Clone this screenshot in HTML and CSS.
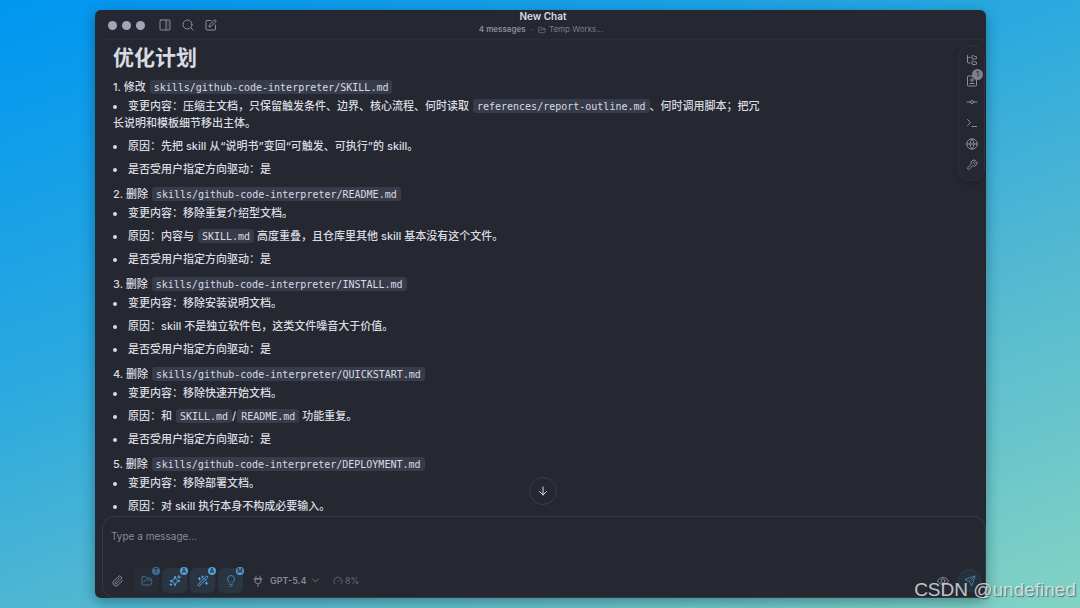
FILE: index.html
```html
<!DOCTYPE html>
<html lang="zh-CN">

<head>
    <meta charset="UTF-8">
    <title>New Chat</title>
    <link rel="stylesheet" href="styles.css">
</head>
<body>
<div class="window">
    <header class="titlebar">
        <div class="tools">
            <div class="lights">
                <span class="light"></span>
                <span class="light"></span>
                <span class="light"></span>
            </div>
            <button class="tool" aria-label="Sidebar"><svg class="icon" viewBox="0 0 24 24"><rect x="2" y="2" width="20" height="20" rx="2"/><path d="M14 2v20M18 7h.01M18 12h.01M18 17h.01"/></svg></button>
            <button class="tool" aria-label="Search"><svg class="icon" viewBox="0 0 24 24"><circle cx="11" cy="11" r="9"/><path d="m22 22-4.5-4.5"/></svg></button>
            <button class="tool" aria-label="New chat"><svg class="icon" viewBox="0 0 24 24"><path d="M12 3H4a2 2 0 0 0-2 2v15a2 2 0 0 0 2 2h15a2 2 0 0 0 2-2v-8"/><path d="M18.4 2.6a2.1 2.1 0 0 1 3 3L12.4 14.600l-4.400 1.400 1.400-4.400z"/></svg></button>
        </div>
        <div class="heading">
            <div class="title">New Chat</div>
            <div class="subtitle">
                <span class="count">4 messages</span>
                <span class="sep">·</span>
                <svg class="icon folder" viewBox="0 0 24 24"><path d="m6 14 1.500-2.900A2 2 0 0 1 9.240 10H20a2 2 0 0 1 1.940 2.500l-1.540 6a2 2 0 0 1-1.950 1.500H4a2 2 0 0 1-2-2V5a2 2 0 0 1 2-2h3.900a2 2 0 0 1 1.690.9l.810 1.200a2 2 0 0 0 1.670.9H18a2 2 0 0 1 2 2v2"/></svg>
                <span>Temp Works...</span>
            </div>
        </div>
    </header>

    <main class="content">
        <article class="message">
            <h1>优化计划</h1>
            <section>
                <p>1. 修改 <code>skills/github-code-interpreter/SKILL.md</code></p>
                <ul>
                    <li>变更内容：压缩主文档，只保留触发条件、边界、核心流程、何时读取 <code>references/report-outline.md</code>、何时调用脚本；把冗长说明和模板细节移出主体。</li>
                    <li>原因：先把 skill 从“说明书”变回“可触发、可执行”的 skill。</li>
                    <li>是否受用户指定方向驱动：是</li>
                </ul>
            </section>
            <section>
                <p>2. 删除 <code>skills/github-code-interpreter/README.md</code></p>
                <ul>
                    <li>变更内容：移除重复介绍型文档。</li>
                    <li>原因：内容与 <code>SKILL.md</code> 高度重叠，且仓库里其他 skill 基本没有这个文件。</li>
                    <li>是否受用户指定方向驱动：是</li>
                </ul>
            </section>
            <section>
                <p>3. 删除 <code>skills/github-code-interpreter/INSTALL.md</code></p>
                <ul>
                    <li>变更内容：移除安装说明文档。</li>
                    <li>原因：skill 不是独立软件包，这类文件噪音大于价值。</li>
                    <li>是否受用户指定方向驱动：是</li>
                </ul>
            </section>
            <section>
                <p>4. 删除 <code>skills/github-code-interpreter/QUICKSTART.md</code></p>
                <ul>
                    <li>变更内容：移除快速开始文档。</li>
                    <li>原因：和 <code>SKILL.md</code>/<code>README.md</code> 功能重复。</li>
                    <li>是否受用户指定方向驱动：是</li>
                </ul>
            </section>
            <section>
                <p>5. 删除 <code>skills/github-code-interpreter/DEPLOYMENT.md</code></p>
                <ul>
                    <li>变更内容：移除部署文档。</li>
                    <li>原因：对 skill 执行本身不构成必要输入。</li>
                </ul>
            </section>
        </article>

        <nav class="rail">
            <button aria-label="Files"><svg class="icon" viewBox="0 0 24 24"><path d="M20 10a1 1 0 0 0 1-1V6a1 1 0 0 0-1-1h-2.500a1 1 0 0 1-.8-.4l-.9-1.200A1 1 0 0 0 15 3h-2a1 1 0 0 0-1 1v5a1 1 0 0 0 1 1Z"/><path d="M20 21a1 1 0 0 0 1-1v-3a1 1 0 0 0-1-1h-2.900a1 1 0 0 1-.88-.55l-.42-.85a1 1 0 0 0-.92-.6H13a1 1 0 0 0-1 1v5a1 1 0 0 0 1 1Z"/><path d="M3 5a2 2 0 0 0 2 2h3M3 3v13a2 2 0 0 0 2 2h3"/></svg></button>
            <button aria-label="Changes"><svg class="icon" viewBox="0 0 24 24"><path d="M15 2H5a2 2 0 0 0-2 2v16a2 2 0 0 0 2 2h14a2 2 0 0 0 2-2V8z"/><path d="M8 10h8M12 6v8M8 17h8"/></svg><span class="count-badge">1</span></button>
            <button aria-label="Commits"><svg class="icon" viewBox="0 0 24 24"><circle cx="12" cy="12" r="3"/><path d="M2 12h7M15 12h7"/></svg></button>
            <button aria-label="Terminal"><svg class="icon" viewBox="0 0 24 24"><path d="m3 17 6-6-6-6M12 19h9"/></svg></button>
            <button aria-label="Browser"><svg class="icon" viewBox="0 0 24 24"><circle cx="12" cy="12" r="10.500"/><path d="M12 2a14.500 14.500 0 0 0 0 20 14.500 14.500 0 0 0 0-20M2 12h20"/></svg></button>
            <button aria-label="Settings"><svg class="icon" viewBox="0 0 24 24"><path d="M14.700 6.300a1 1 0 0 0 0 1.400l1.600 1.600a1 1 0 0 0 1.400 0l3.770-3.770a6 6 0 0 1-7.940 7.940l-6.910 6.910a2.120 2.120 0 0 1-3-3l6.910-6.910a6 6 0 0 1 7.940-7.940z"/></svg></button>
        </nav>

        <button class="to-bottom" aria-label="Scroll to bottom"><svg class="icon" viewBox="0 0 24 24"><path d="M12 4v16M19 13l-7 7-7-7"/></svg></button>
    </main>

    <form class="composer">
        <textarea aria-label="Message" placeholder="Type a message..."></textarea>
        <div class="actions">
            <button type="button" class="plain" aria-label="Attach"><svg class="icon" viewBox="0 0 24 24"><path d="m21.440 11.050-9.190 9.190a6 6 0 0 1-8.490-8.490l8.570-8.570A4 4 0 1 1 18 8.840l-8.590 8.570a2 2 0 0 1-2.830-2.830l8.490-8.480"/></svg></button>
            <div class="toggles">
                <button type="button" class="toggle dim" aria-label="Workspace"><svg class="icon" viewBox="0 0 24 24"><path d="m6 14 1.500-2.900A2 2 0 0 1 9.240 10H20a2 2 0 0 1 1.940 2.500l-1.540 6a2 2 0 0 1-1.950 1.500H4a2 2 0 0 1-2-2V5a2 2 0 0 1 2-2h3.900a2 2 0 0 1 1.690.9l.810 1.200a2 2 0 0 0 1.670.9H18a2 2 0 0 1 2 2v2"/></svg><span class="badge">T</span></button>
                <button type="button" class="toggle" aria-label="Agent"><svg class="icon" viewBox="0 0 24 24"><path d="M10 15.500A2 2 0 0 0 8.500 14l-6-1.600a.5.5 0 0 1 0-1L8.500 10A2 2 0 0 0 10 8.500l1.600-6a.5.5 0 0 1 1 0l1.500 6a2 2 0 0 0 1.400 1.400l6 1.600a.5.5 0 0 1 0 1l-6 1.500a2 2 0 0 0-1.400 1.500l-1.500 6a.5.5 0 0 1-1 0z"/><path d="M20 1v6M23 4h-6M4 17v4M6 19H2"/></svg><span class="badge">A</span></button>
                <button type="button" class="toggle" aria-label="Skills"><svg class="icon" viewBox="0 0 24 24"><path d="m21.600 3.600-1.200-1.200a1.200 1.200 0 0 0-1.700 0L2.400 18.600a1.200 1.200 0 0 0 0 1.700l1.200 1.200a1.200 1.200 0 0 0 1.700 0L21.600 5.400a1.200 1.200 0 0 0 0-1.800M14 7l3 3M5 5v5M19 14v5M11 2v3M7.500 7.500h-5M21.500 16.500h-5M12.500 3.500h-3"/></svg><span class="badge">A</span></button>
                <button type="button" class="toggle" aria-label="Thinking"><svg class="icon thin" viewBox="0 0 24 24"><path d="M15.500 15c.2-1 .7-1.700 1.500-2.500A6.500 6.500 0 0 0 19 8 7 7 0 0 0 5 8c0 1.500.5 3 2 4.500.8.8 1.300 1.500 1.500 2.500M9 18.500h6M10 22.500h4"/></svg><span class="badge">M</span></button>
            </div>
            <svg class="icon plug" viewBox="0 0 24 24"><path d="M12 23v-6M8 8V2M16 8V2M18 8v4a5 5 0 0 1-5 5h-2a5 5 0 0 1-5-5V8zM4 8h16"/></svg>
            <label class="model">
                <select aria-label="Model"><option>GPT-5.4</option></select>
                <svg class="icon" viewBox="0 0 24 24"><path d="m4 8 8 8 8-8"/></svg>
            </label>
            <span class="usage"><svg class="icon" viewBox="0 0 24 24"><path d="m12 14 4-4M4 19a10 10 0 1 1 16 0"/></svg>8%</span>
            <button type="button" class="plain preview" aria-label="Preview"><svg class="icon" viewBox="0 0 24 24"><path d="M1 12a12 12 0 0 1 22 0 12 12 0 0 1-22 0"/><circle cx="12" cy="12" r="4"/></svg></button>
            <button class="send" aria-label="Send"><svg class="icon" viewBox="0 0 24 24"><path d="M14.500 21.700a.5.5 0 0 0 1 0l6.500-19a.5.5 0 0 0-.6-.6l-19 6.500a.5.5 0 0 0 0 1l8 3.200a2 2 0 0 1 1.100 1.100zM21.800 2.200 10.900 13.100"/></svg></button>
        </div>
    </form>
</div>
<div class="watermark">CSDN @undefined</div>
</body>

</html>
```
FILE: styles.css
```css
* {
  box-sizing: border-box;
}
body {
  margin: 0;
  height: 100vh;
  padding: 10px 94px 10px 95px;
  overflow: hidden;
  background: linear-gradient(160deg, #0096f1, #2ba9df 39%, #50b7d2 62%, #83d3c4);
  font-family: Inter, "Noto Sans CJK SC", sans-serif;
  color: #d9dbe2;
}
button, textarea, select {
  font-family: inherit;
  color: inherit;
  background: none;
  border: 0;
  margin: 0;
  padding: 0;
}
button {
  display: flex;
  align-items: center;
  justify-content: center;
}
.icon {
  display: block;
  flex: none;
  width: 12px;
  height: 12px;
  fill: none;
  stroke: currentColor;
  stroke-width: 2;
  stroke-linecap: round;
  stroke-linejoin: round;
}
.window {
  display: flex;
  flex-direction: column;
  height: 100%;
  padding-left: 5px;
  border-radius: 6px;
  overflow: hidden;
  background: #252830;
  box-shadow: 0 4px 14px rgba(0, 30, 50, .4);
}

/* title bar */
.titlebar {
  display: grid;
  grid-template-columns: 1fr auto 1fr;
  height: 30px;
  border-bottom: 1px solid #2b2e38;
}
.tools {
  display: flex;
  align-items: center;
  gap: 11px;
  padding-left: 8px;
  padding-top: 1px;
  color: #8b8e99;
}
.lights {
  display: flex;
  gap: 5px;
  margin-right: 3px;
}
.light {
  width: 9px;
  height: 9px;
  border-radius: 50%;
  background: #a0a5b8;
}
.heading {
  text-align: center;
}
.title {
  font-size: 10px;
  line-height: 13px;
  font-weight: 600;
}
.subtitle {
  display: flex;
  align-items: center;
  gap: 3px;
  padding-right: 4px;
  font-size: 8px;
  line-height: 13px;
  color: #7a7d8a;
}
.count {
  font-weight: 600;
  color: #8b8e9b;
}
.sep {
  padding: 0 2px;
}
.folder {
  width: 8px;
  height: 8px;
}

/* conversation */
.content {
  position: relative;
  flex: 1;
  min-height: 0;
  display: flex;
  justify-content: space-between;
  align-items: flex-start;
  overflow: hidden;
}
.message {
  max-width: 668px;
  padding: 5px 0 0 13px;
  font-size: 11px;
  line-height: 17px;
  font-weight: 500;
}
.message h1 {
  margin: 0 0 8px;
  font-size: 21px;
  line-height: 26px;
  font-weight: 700;
}
.message section {
  margin-bottom: 8px;
}
.message p {
  margin: 0 0 2px;
}
.message ul {
  display: grid;
  gap: 6px;
  margin: 0;
  padding: 0;
  list-style: none;
}
.message li::before {
  content: "";
  display: inline-block;
  width: 4px;
  height: 4px;
  margin-right: 11px;
  border-radius: 50%;
  background: currentColor;
  vertical-align: middle;
}
.message code {
  margin-left: 1px;
  padding: 2px 4px 1px;
  border-radius: 3px;
  background: #383b49;
  font-family: "DejaVu Sans Mono", monospace;
  font-size: 10px;
  line-height: 12px;
  font-weight: 400;
}
.rail {
  display: grid;
  gap: 9px;
  flex: none;
  width: 27px;
  margin: 5px 1px 0 0;
  padding: 8px 6px 9px;
  border: 1px solid #2e313b;
  border-radius: 12px;
  box-shadow: 0 2px 6px rgba(0, 0, 0, .15);
  color: #8b8e9b;
}
.rail button {
  position: relative;
}
.count-badge {
  position: absolute;
  top: -6px;
  right: -5px;
  width: 11px;
  height: 11px;
  border-radius: 50%;
  background: #7d8090;
  color: #252830;
  font-size: 8px;
  line-height: 11px;
}
.to-bottom {
  position: absolute;
  left: 50%;
  bottom: 11px;
  width: 28px;
  height: 28px;
  margin-left: -14px;
  border: 1px solid #3a3d48;
  border-radius: 50%;
  background: #252830;
}

/* message box */
.composer {
  display: flex;
  flex-direction: column;
  height: 82px;
  margin-left: 2px;
  border: 1px solid #373b48;
  border-radius: 12px;
}
.composer textarea {
  flex: 1;
  min-height: 0;
  padding: 11px 8px;
  resize: none;
  font-size: 10px;
  line-height: 16px;
}
.composer textarea::placeholder {
  color: #898c99;
}
.actions {
  display: flex;
  align-items: center;
  padding: 0 4px 4px 9px;
  color: #858895;
}
.toggles {
  display: flex;
  gap: 3px;
  margin: 0 9px 0 10px;
}
.toggle {
  position: relative;
  width: 25px;
  height: 25px;
  border-radius: 6px;
  background: #293642;
  color: #5aa5df;
}
.badge {
  position: absolute;
  top: -1px;
  right: -1px;
  width: 8px;
  height: 8px;
  border-radius: 50%;
  background: #569dd5;
  color: #252830;
  font-size: 6px;
  line-height: 8px;
  font-weight: 600;
}
.dim {
  background: #272d36;
  color: #41708f;
}
.dim .badge {
  background: #3f6d92;
}
.thin {
  color: #4583b2;
}
.model {
  display: flex;
  align-items: center;
  gap: 4px;
  margin: 0 13px 0 6px;
}
.model select {
  appearance: none;
  font-size: 9px;
  line-height: 12px;
  font-weight: 600;
}
.model .icon {
  width: 9px;
  height: 9px;
}
.usage {
  display: flex;
  align-items: center;
  gap: 2px;
  font-size: 9px;
  color: #686b77;
}
.usage .icon {
  width: 10px;
  height: 10px;
}
.preview {
  margin-left: auto;
  margin-right: 9px;
}
.send {
  width: 23px;
  height: 23px;
  border: 1px solid #294054;
  border-radius: 50%;
  background: #26303c;
  color: #477ba3;
}

.watermark {
  position: absolute;
  right: 4px;
  bottom: 6px;
  font-family: "Liberation Sans", sans-serif;
  font-size: 19px;
  line-height: 24px;
  color: rgba(235, 238, 240, .8);
  text-shadow: 1px 1px 1px rgba(40, 50, 55, .6);
}
```
